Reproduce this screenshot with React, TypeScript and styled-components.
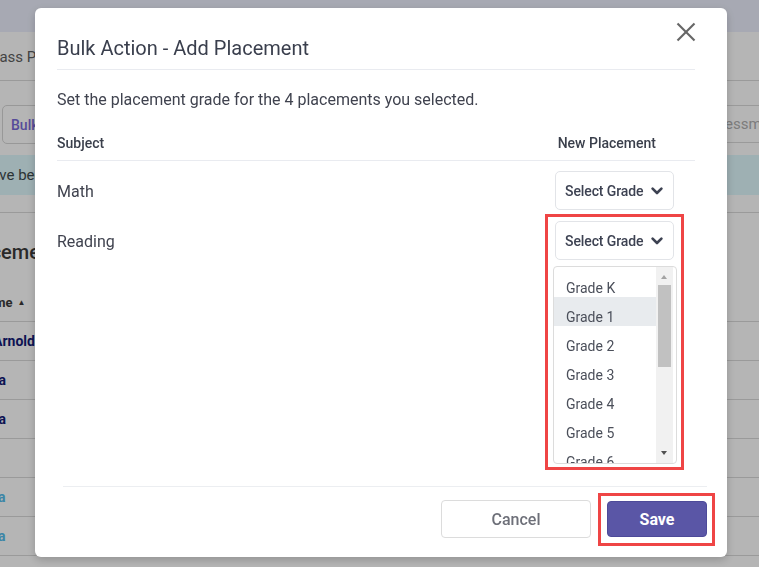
import styled, { createGlobalStyle } from "styled-components"

const GlobalStyle = createGlobalStyle`
    * { box-sizing: border-box; }
    body {
        margin: 0;
        font-family: Roboto, "Liberation Sans", sans-serif;
        overflow: hidden;
    }
`

// ---- page behind the dialog ----
const Page = styled.div`
    width: 759px;
    height: 567px;
    background: #fff;
    overflow: hidden;
`
const TopBar = styled.div`
    height: 32px;
    background: #eceffd;
`
const Breadcrumb = styled.div`
    height: 49px;
    padding-top: 2px;
    display: flex;
    align-items: center;
    border-bottom: 1px solid #dadada;
    font-size: 15px;
    color: #5f5f5f;
    white-space: nowrap;
`
const Toolbar = styled.div`
    display: flex;
    justify-content: space-between;
    align-items: flex-start;
    padding: 24px 0 11px;
`
const BulkButton = styled.div`
    margin-left: 2px;
    height: 39px;
    padding: 0 14px 0 8px;
    display: flex;
    align-items: center;
    border: 1px solid #d6d6d6;
    border-radius: 5px;
    font-size: 14px;
    font-weight: 500;
    color: #7a6ad8;
`
const Search = styled.div`
    width: 170px;
    height: 38px;
    margin-right: -50px;
    padding-left: 10px;
    display: flex;
    align-items: center;
    border-top: 1px solid #dadada;
    border-bottom: 1px solid #dadada;
    border-left: 1px solid #dadada;
    font-size: 15px;
    color: #b0b0b0;
    white-space: nowrap;
`
const Banner = styled.div`
    height: 40px;
    display: flex;
    align-items: center;
    background: #dff8fd;
    font-size: 15px;
    color: #3d4a4d;
    white-space: nowrap;
`
const Divider = styled.div`
    margin-top: 17px;
    border-top: 1px solid #dadada;
`
const Heading = styled.div`
    height: 70px;
    padding-top: 8px;
    display: flex;
    align-items: center;
    font-size: 20px;
    font-weight: 500;
    color: #3b3b3b;
    white-space: nowrap;
`
const HeadRow = styled.div`
    height: 39px;
    display: flex;
    align-items: center;
    border-bottom: 1px solid #dadada;
    font-size: 13px;
    font-weight: 700;
    color: #3b3b3b;
    white-space: nowrap;
`
const Row = styled.div`
    height: 39px;
    display: flex;
    align-items: center;
    border-bottom: 1px solid #dadada;
    white-space: nowrap;
`
const Shifted = styled.span<{ $shift: number }>`
    margin-left: ${p => -p.$shift}px;
`
const Name = styled.span<{ $shift: number; $light?: boolean }>`
    margin-left: ${p => -p.$shift}px;
    font-size: 14px;
    font-weight: 700;
    color: ${p => (p.$light ? "#56bdec" : "#121a75")};
`
const SortArrow = styled.span`
    margin-left: 5px;
    font-size: 8px;
`

const Backdrop = styled.div`
    position: fixed;
    inset: 0;
    background: rgba(0, 0, 0, 0.29);
`

// ---- dialog ----
const Modal = styled.div`
    position: fixed;
    left: 35px;
    top: 8px;
    width: 692px;
    height: 549px;
    display: flex;
    flex-direction: column;
    background: #fff;
    border-radius: 6px;
    box-shadow: 0 3px 10px rgba(0, 0, 0, 0.2);
`
const Header = styled.div`
    margin: 0 32px 0 22px;
    padding: 28px 0 9px;
    border-bottom: 1px solid #e9ebf0;
`
const Title = styled.h2`
    margin: 0;
    font-size: 20px;
    line-height: 24px;
    font-weight: 400;
    color: #3a3f4d;
`
const CloseButton = styled.button`
    position: absolute;
    top: 7px;
    right: 24px;
    padding: 0;
    border: none;
    background: none;
    color: #666;
    display: flex;
`
const Body = styled.div`
    flex: 1;
    margin: 0 32px 0 22px;
    padding-top: 20px;
`
const Intro = styled.p`
    margin: 0 0 23px;
    font-size: 16px;
    line-height: 20px;
    color: #40434f;
`
const TableHead = styled.div`
    display: flex;
    justify-content: space-between;
    padding-bottom: 7px;
    border-bottom: 1px solid #e9ebf0;
    font-size: 14px;
    line-height: 20px;
    font-weight: 500;
    color: #3a3f4b;
`
const HeadRight = styled.span`
    margin-right: 39px;
`
const SubjectRow = styled.div`
    display: flex;
    justify-content: space-between;
    align-items: center;
    padding: 10px 0 1px;
    font-size: 16px;
    color: #40434f;
`
const SubjectName = styled.span`
    padding-top: 2px;
`
const SelectWrap = styled.div`
    position: relative;
    margin-right: 21px;
`
const Select = styled.div`
    width: 119px;
    height: 39px;
    padding: 1px 10px 0 9px;
    display: flex;
    align-items: center;
    justify-content: space-between;
    border: 1px solid #e2e4e8;
    border-radius: 5px;
    font-size: 14px;
    font-weight: 500;
    letter-spacing: -0.1px;
    color: #3d4252;
`
const Highlight = styled.div`
    position: absolute;
    border: 3px solid #ef4545;
    pointer-events: none;
`
const ListHighlight = styled(Highlight)`
    top: -7px;
    left: -10px;
    right: -10px;
    height: 256px;
`
const SaveHighlight = styled(Highlight)`
    inset: -8px -8px -9px -9px;
`
const List = styled.div`
    position: absolute;
    top: 45px;
    left: -2px;
    width: 124px;
    height: 198px;
    padding-top: 1px;
    border: 1px solid #dcdcdc;
    border-radius: 4px;
    background: #fff;
    overflow: hidden;
    z-index: 1;
`
const Option = styled.div<{ $active?: boolean }>`
    width: 103px;
    height: 29px;
    padding: 11px 0 0 12px;
    line-height: 18px;
    font-size: 14px;
    color: #4b4f5a;
    background: ${p => (p.$active ? "#e8ebee" : "transparent")};
`
const ScrollTrack = styled.div`
    position: absolute;
    top: 0;
    bottom: 0;
    right: 3px;
    width: 17px;
    background: #f1f1f1;
`
const ScrollThumb = styled.div`
    position: absolute;
    top: 18px;
    left: 2px;
    width: 13px;
    height: 82px;
    background: #c1c1c1;
`
const ScrollArrow = styled.div<{ $down?: boolean }>`
    position: absolute;
    left: 5px;
    ${p => (p.$down ? "bottom: 8px;" : "top: 8px;")}
    width: 0;
    height: 0;
    border-left: 3.5px solid transparent;
    border-right: 3.5px solid transparent;
    ${p => (p.$down ? "border-top: 4px solid #505050;" : "border-bottom: 4px solid #a3a3a3;")}
`
const Footer = styled.div`
    margin: 0 20px 0 28px;
    padding: 13px 0 19px;
    display: flex;
    justify-content: flex-end;
    align-items: center;
    gap: 16px;
    border-top: 1px solid #eceef1;
`
const Button = styled.button<{ $primary?: boolean }>`
    height: ${p => (p.$primary ? 36 : 38)}px;
    width: ${p => (p.$primary ? 100 : 150)}px;
    border-radius: 4px;
    border: 1px solid ${p => (p.$primary ? "#4d4a99" : "#dcdcdc")};
    background: ${p => (p.$primary ? "#5a56a6" : "#fff")};
    color: ${p => (p.$primary ? "#fff" : "#6e7079")};
    font-family: inherit;
    font-size: 16px;
    font-weight: ${p => (p.$primary ? 700 : 500)};
`
const SaveWrap = styled.div`
    position: relative;
    display: flex;
`

const Chevron = () => (
    <svg width="12" height="8" viewBox="0 0 12 8">
        <polyline points="1.6,1.6 6,6 10.4,1.6" fill="none" stroke="#3d4252" strokeWidth="2.6" strokeLinecap="round" strokeLinejoin="round" />
    </svg>
)

const grades = ["Grade K", "Grade 1", "Grade 2", "Grade 3", "Grade 4", "Grade 5", "Grade 6", "Grade 7"]

export default function App() {
    return (
        <>
            <GlobalStyle />
            <Page>
                <TopBar />
                <Breadcrumb><Shifted $shift={14}>Class Progress</Shifted></Breadcrumb>
                <Toolbar>
                    <BulkButton>Bulk Actions</BulkButton>
                    <Search>Search Assessments</Search>
                </Toolbar>
                <Banner><Shifted $shift={17}>have been updated.</Shifted></Banner>
                <Divider />
                <Heading><Shifted $shift={38}>Placements</Shifted></Heading>
                <HeadRow><Shifted $shift={22}>Name</Shifted><SortArrow>▲</SortArrow></HeadRow>
                <Row><Name $shift={7}>Arnold</Name></Row>
                <Row><Name $shift={30}>Maria</Name></Row>
                <Row><Name $shift={30}>Maria</Name></Row>
                <Row />
                <Row><Name $shift={19} $light>Ana</Name></Row>
                <Row><Name $shift={19} $light>Ana</Name></Row>
            </Page>
            <Backdrop />
            <Modal>
                <Header>
                    <Title>Bulk Action - Add Placement</Title>
                </Header>
                <CloseButton aria-label="Close">
                    <svg width="34" height="34" viewBox="0 0 24 24" fill="none" stroke="currentColor" strokeWidth="1.45">
                        <path d="M18 6 6 18" />
                        <path d="m6 6 12 12" />
                    </svg>
                </CloseButton>
                <Body>
                    <Intro>Set the placement grade for the 4 placements you selected.</Intro>
                    <TableHead>
                        <span>Subject</span>
                        <HeadRight>New Placement</HeadRight>
                    </TableHead>
                    <SubjectRow>
                        <SubjectName>Math</SubjectName>
                        <SelectWrap>
                            <Select>Select Grade <Chevron /></Select>
                        </SelectWrap>
                    </SubjectRow>
                    <SubjectRow>
                        <SubjectName>Reading</SubjectName>
                        <SelectWrap>
                            <Select>Select Grade <Chevron /></Select>
                            <List>
                                {grades.map((g, i) => (
                                    <Option key={g} $active={i === 1}>{g}</Option>
                                ))}
                                <ScrollTrack>
                                    <ScrollArrow />
                                    <ScrollThumb />
                                    <ScrollArrow $down />
                                </ScrollTrack>
                            </List>
                            <ListHighlight />
                        </SelectWrap>
                    </SubjectRow>
                </Body>
                <Footer>
                    <Button>Cancel</Button>
                    <SaveWrap>
                        <Button $primary>Save</Button>
                        <SaveHighlight />
                    </SaveWrap>
                </Footer>
            </Modal>
        </>
    )
}
